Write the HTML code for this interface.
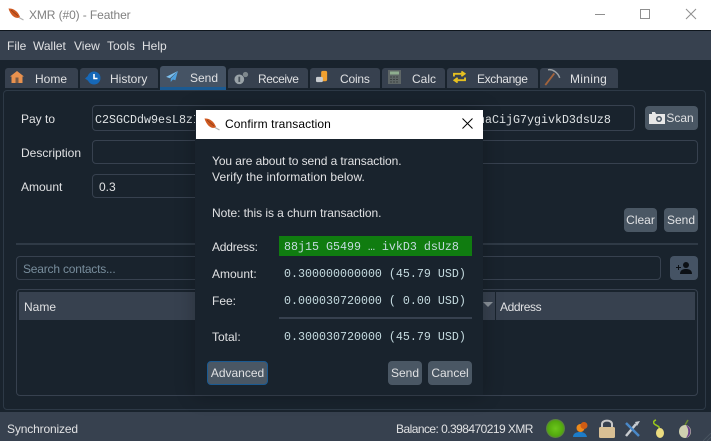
<!DOCTYPE html>
<html><head><meta charset="utf-8"><style>
html,body{margin:0;padding:0;background:#19232d}
body{width:711px;height:441px;position:relative;overflow:hidden;font-family:"Liberation Sans",sans-serif;font-size:12px;color:#e0e1e3}
div,span,svg{position:absolute;box-sizing:border-box}
.t{white-space:nowrap;line-height:16px;height:16px}
.tab{background:#37414f;top:68px;height:20px;border-radius:3px 3px 0 0}
.inp{border:1px solid #37414f;border-radius:4px;background:#19232d}
.btn{background:#4a5764;border-radius:4px;text-align:center;line-height:24px;height:24px;top:0;color:#e0e1e3}
.m{font-family:"Liberation Mono",monospace;font-size:11.67px;color:#c5dbe0;white-space:pre;line-height:14px;height:14px}
</style></head><body>
<!-- title bar -->
<div style="left:0;top:0;width:711px;height:30px;background:#fff"></div>
<div style="left:0;top:30px;width:711px;height:1px;background:#0f161d"></div>
<svg style="left:8px;top:8px" width="16" height="13" viewBox="0 0 16 13"><path d="M0.500 0.500C5 0 10 3 12 9C9 11.500 3 9 0.500 0.500Z" fill="#cf5a22"/><path d="M3 2L10 8" stroke="#8a3a14" stroke-width=".7"/><path d="M11 9.500L15.500 12" stroke="#b0b0b0" stroke-width="1.200" fill="none"/></svg>
<div class="t" style="left:29px;top:7px;color:#808080;letter-spacing:-.1px">XMR (#0) - Feather</div>
<svg style="left:590px;top:5px" width="120" height="20" viewBox="0 0 120 20" fill="none" stroke="#8f8f8f"><path d="M5 9.500H15"/><rect x="50.500" y="4.500" width="9" height="9"/><path d="M96 4L106 14M106 4L96 14"/></svg>
<!-- menu -->
<div style="left:0;top:31px;width:711px;height:29px;background:#37414f"></div>
<div class="t" style="left:7px;top:38px">File</div>
<div class="t" style="left:33px;top:38px">Wallet</div>
<div class="t" style="left:74px;top:38px">View</div>
<div class="t" style="left:107px;top:38px">Tools</div>
<div class="t" style="left:142px;top:38px">Help</div>
<!-- tab pane -->
<div style="left:3px;top:90px;width:703px;height:320px;border:1px solid #2d3946;border-radius:4px;background:#19232d"></div>
<!-- tabs -->
<div class="tab" style="left:5px;width:73px"></div>
<div class="tab" style="left:80px;width:78px"></div>
<div class="tab" style="left:160px;width:66px;top:66px;height:24px;background:#455364;border-bottom:3px solid #1a5a92"></div>
<div class="tab" style="left:228px;width:80px"></div>
<div class="tab" style="left:310px;width:70px"></div>
<div class="tab" style="left:382px;width:63px"></div>
<div class="tab" style="left:447px;width:91px"></div>
<div class="tab" style="left:540px;width:78px"></div>
<svg style="left:10px;top:71px" width="14" height="12" viewBox="0 0 14 12"><path d="M0 5.500L7 0L14 5.500H12.500V12H1.500V5.500Z" fill="#e8914e"/><rect x="5.500" y="6.500" width="3" height="5.500" fill="#7a5a44"/></svg>
<svg style="left:85px;top:71px" width="16" height="14" viewBox="0 0 16 14"><circle cx="9" cy="7" r="6.500" fill="#1668b8"/><path d="M0 7.500L3.500 4.500V10Z" fill="#1668b8"/><path d="M9 3V7.500H12.500" stroke="#fff" stroke-width="1.600" fill="none"/></svg>
<svg style="left:166px;top:71px" width="12" height="11" viewBox="0 0 14 13"><path d="M14 0L0 7L4.500 8.500Z" fill="#7cc0ee"/><path d="M14 0L5.500 9V13L8 10L11 11Z" fill="#4ea0de"/></svg>
<svg style="left:234px;top:71px" width="15" height="14" viewBox="0 0 17 15"><circle cx="6" cy="9" r="5.500" fill="#9aa3a8"/><circle cx="13" cy="3.500" r="3" fill="#7e878c"/><rect x="5" y="6" width="2" height="6" fill="#48525a"/></svg>
<svg style="left:316px;top:70px" width="12" height="13" viewBox="0 0 14 15"><rect x="6" y="1" width="7" height="12" rx="2" fill="#f0a030"/><rect x="0" y="8" width="8" height="6" rx="1.500" fill="#c8ccd0"/></svg>
<svg style="left:388px;top:70px" width="13" height="14" viewBox="0 0 13 14"><rect width="13" height="14" fill="#5e6666"/><rect x="2" y="1.500" width="9" height="3" fill="#8fae8f"/><path d="M2 7H11M2 9.500H11M2 12H11" stroke="#3c4242" stroke-dasharray="2 1"/></svg>
<svg style="left:453px;top:71px" width="13" height="12" viewBox="0 0 14 13" fill="none" stroke="#e6c020" stroke-width="2"><path d="M1 6V3H12M9 0.500L12.500 3L9 5.500"/><path d="M13 7V10H2M5 7.500L1.500 10L5 12.500"/></svg>
<svg style="left:544px;top:68px" width="17" height="18" viewBox="0 0 18 20" fill="none"><path d="M1 19L11 6" stroke="#a4643c" stroke-width="2"/><path d="M4 2C9 1 15 5 17 11" stroke="#9aa0a4" stroke-width="1.600"/></svg>
<div class="t" style="left:35px;top:71px">Home</div>
<div class="t" style="left:110px;top:71px">History</div>
<div class="t" style="left:190px;top:70px">Send</div>
<div class="t" style="left:258px;top:71px;letter-spacing:-.4px">Receive</div>
<div class="t" style="left:340px;top:71px;letter-spacing:-.2px">Coins</div>
<div class="t" style="left:412px;top:71px">Calc</div>
<div class="t" style="left:477px;top:71px;letter-spacing:-.35px">Exchange</div>
<div class="t" style="left:570px;top:71px;letter-spacing:.3px">Mining</div>
<!-- form -->
<div class="t" style="left:21px;top:111px">Pay to</div>
<div class="t" style="left:21px;top:145px">Description</div>
<div class="t" style="left:21px;top:179px">Amount</div>
<div class="inp" style="left:92px;top:105px;width:543px;height:26px"></div>
<div class="inp" style="left:92px;top:140px;width:606px;height:24px"></div>
<div class="inp" style="left:92px;top:174px;width:200px;height:24px"></div>
<div class="m" style="left:95px;top:113px;color:#dfe3e5">C2SGCDdw9esL8zI</div>
<div class="m" style="left:478px;top:113px;color:#dfe3e5">naCijG7ygivkD3dsUz8</div>
<div class="t" style="left:99px;top:179px">0.3</div>
<div class="btn" style="left:645px;top:106px;width:53px;padding-left:17px">Scan</div>
<svg style="left:649px;top:112px" width="16" height="12" viewBox="0 0 16 12"><path d="M0 2H3V0H6L7 2H16V12H0Z" fill="#e8e8e8"/><circle cx="10" cy="7" r="3" fill="#4a5764"/><circle cx="10" cy="7" r="1.500" fill="#e8e8e8"/></svg>
<div class="btn" style="left:624px;top:208px;width:33px">Clear</div>
<div class="btn" style="left:664px;top:208px;width:34px">Send</div>
<div style="left:16px;top:243px;width:682px;height:2px;background:#2f3a46"></div>
<div class="inp" style="left:16px;top:256px;width:645px;height:24px"></div>
<div class="t" style="left:23px;top:261px;color:#788d9c;letter-spacing:-.2px">Search contacts...</div>
<div class="btn" style="left:670px;top:256px;width:28px;background:#455364"></div>
<svg style="left:676px;top:262px" width="16" height="12" viewBox="0 0 16 12" fill="#0c1015"><circle cx="10" cy="3" r="3"/><path d="M4 12C4 8 7 7 10 7S16 8 16 12Z"/><path d="M0 5H2V3H3V5H5V6H3V8H2V6H0Z"/></svg>
<div class="inp" style="left:16px;top:289px;width:682px;height:107px"></div>
<div style="left:19px;top:292px;width:676px;height:28px;background:#37414f"></div>
<div style="left:495px;top:292px;width:1px;height:28px;background:#19232d"></div>
<div class="t" style="left:24px;top:299px">Name</div>
<div class="t" style="left:500px;top:299px;letter-spacing:-.4px">Address</div>
<svg style="left:483px;top:302px" width="10" height="6"><path d="M0 0H10L5 5Z" fill="#8a929a"/></svg>
<!-- status -->
<div style="left:0;top:412px;width:711px;height:29px;background:#37414f"></div>
<div class="t" style="left:7px;top:421px;letter-spacing:-.15px">Synchronized</div>
<div class="t" style="left:396px;top:421px;letter-spacing:-.55px">Balance: 0.398470219 XMR</div>
<svg style="left:546px;top:419px" width="19" height="19"><defs><radialGradient id="g"><stop offset="0" stop-color="#6cc61c"/><stop offset=".8" stop-color="#52a80e"/><stop offset="1" stop-color="#5d7a4a"/></radialGradient></defs><circle cx="9.500" cy="9.500" r="9.500" fill="url(#g)"/></svg>
<svg style="left:573px;top:421px" width="16" height="16" viewBox="0 0 16 16"><path d="M0 16C0 12 4 11 7 11C10 11 13 12 14 16Z" fill="#1d7cc8"/><circle cx="7.500" cy="7" r="4" fill="#ed8a1c"/><circle cx="11" cy="4.500" r="3.500" fill="#cf5c14"/></svg>
<svg style="left:598px;top:419px" width="18" height="19" viewBox="0 0 18 19"><path d="M4 9V5C4 0.500 14 0.500 14 5V9" stroke="#c8c8c8" stroke-width="2" fill="none"/><rect x="1" y="8" width="16" height="11" rx="1.500" fill="#d8bf94"/></svg>
<svg style="left:625px;top:421px" width="15" height="16" viewBox="0 0 15 16"><path d="M1 15L11 3" stroke="#c8ccd0" stroke-width="2.500"/><path d="M1 2L14 15" stroke="#4a88c8" stroke-width="2.500"/><path d="M10 1L15 0L12 5Z" fill="#c8ccd0"/></svg>
<svg style="left:653px;top:419px" width="12" height="19" viewBox="0 0 12 19"><path d="M3 1C0 2 0 4 2 5.500S7 7 6 10" stroke="#9ac81c" stroke-width="1.500" fill="none"/><ellipse cx="7" cy="14" rx="4" ry="5" fill="#ecdc80"/></svg>
<svg style="left:679px;top:419px" width="12" height="19" viewBox="0 0 12 19"><path d="M6 6L9 1" stroke="#6a8a30" stroke-width="1.500"/><ellipse cx="6" cy="12.500" rx="6" ry="6.500" fill="#cfd0b0"/><path d="M7 6.200A6 6.500 0 0 1 7 18.800C10 15 10 10 7 6.200Z" fill="#6a4088"/></svg>
<svg style="left:703px;top:433px" width="8" height="8" fill="none" stroke="#48535f"><path d="M0 8L8 0M4 8L8 4"/></svg>
<!-- dialog -->
<div style="left:195px;top:110px;width:288px;height:285px;background:#19232d;box-shadow:0 0 18px rgba(0,0,0,.25)"></div>
<div style="left:196px;top:110px;width:287px;height:29px;background:#fff"></div>
<svg style="left:204px;top:118px" width="16" height="13" viewBox="0 0 16 13"><path d="M0.500 0.500C5 0 10 3 12 9C9 11.500 3 9 0.500 0.500Z" fill="#cf5a22"/><path d="M3 2L10 8" stroke="#8a3a14" stroke-width=".7"/><path d="M11 9.500L15.500 12" stroke="#b0b0b0" stroke-width="1.200" fill="none"/></svg>
<div class="t" style="left:225px;top:116px;color:#000;letter-spacing:.1px">Confirm transaction</div>
<svg style="left:462px;top:118px" width="11" height="11"><path d="M0.500 0.500L10.500 10.500M10.500 0.500L0.500 10.500" stroke="#000" fill="none"/></svg>
<div class="t" style="left:212px;top:153px;letter-spacing:-.08px">You are about to send a transaction.</div>
<div class="t" style="left:212px;top:169px;letter-spacing:.1px">Verify the information below.</div>
<div class="t" style="left:212px;top:205px;letter-spacing:-.06px">Note: this is a churn transaction.</div>
<div class="t" style="left:212px;top:239px;letter-spacing:-.2px">Address:</div>
<div class="t" style="left:212px;top:266px">Amount:</div>
<div class="t" style="left:212px;top:293px">Fee:</div>
<div class="t" style="left:212px;top:329px">Total:</div>
<div style="left:279px;top:236px;width:193px;height:20px;background:#107c10"></div>
<div class="m" style="left:284px;top:240px">88j15 G5499 … ivkD3 dsUz8</div>
<div class="m" style="left:284px;top:267px">0.300000000000 (45.79 USD)</div>
<div class="m" style="left:284px;top:294px">0.000030720000 ( 0.00 USD)</div>
<div style="left:279px;top:317px;width:193px;height:2px;background:#37414f"></div>
<div class="m" style="left:284px;top:330px">0.300030720000 (45.79 USD)</div>
<div class="btn" style="left:207px;top:361px;width:61px;border:1px solid #1a5a92;line-height:22px">Advanced</div>
<div class="btn" style="left:388px;top:361px;width:34px">Send</div>
<div class="btn" style="left:428px;top:361px;width:44px">Cancel</div>
</body></html>
